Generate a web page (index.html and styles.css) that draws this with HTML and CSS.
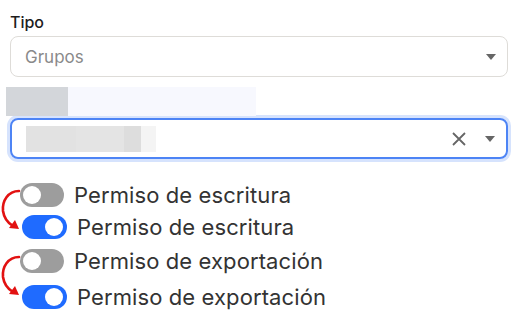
FILE: index.html
```html
<!DOCTYPE html>
<html>
<head>
<meta charset="utf-8">
<link rel="stylesheet" href="styles.css">
</head>
<body>
<div class="page">
  <div class="label">Tipo</div>
  <div class="select">
    <span class="value">Grupos</span>
    <span class="caret"></span>
  </div>
  <div class="blur-row">
    <div class="blur-a"></div>
    <div class="blur-b"></div>
  </div>
  <div class="select focused">
    <span class="blur-value"><i class="b1"></i><i class="b2"></i><i class="b3"></i><i class="b4"></i></span>
    <span class="actions">
      <svg class="clear" width="16" height="16" viewBox="0 0 16 16"><path d="M2 2 L14 14 M14 2 L2 14" stroke="#666" stroke-width="1.8" fill="none"/></svg>
      <span class="caret"></span>
    </span>
  </div>
  <div class="toggles">
    <div class="row r1"><span class="switch off"><span class="knob"></span></span><span class="text">Permiso de escritura</span></div>
    <div class="row r2"><span class="switch on"><span class="knob"></span></span><span class="text">Permiso de escritura</span></div>
    <div class="row r3"><span class="switch off"><span class="knob"></span></span><span class="text">Permiso de exportación</span></div>
    <div class="row r4"><span class="switch on"><span class="knob"></span></span><span class="text">Permiso de exportación</span></div>
    <svg class="arrow a1" width="24" height="46" viewBox="0 0 24 46"><path d="M19 4 C8 4 2 14 3 24 C4 31 8 36 13 39" stroke="#e21111" stroke-width="2.6" fill="none" stroke-linecap="round"/><path d="M9 41 L19 42 L15 33 Z" fill="#e21111"/></svg>
    <svg class="arrow a2" width="24" height="46" viewBox="0 0 24 46"><path d="M19 4 C8 4 2 14 3 24 C4 31 8 36 13 39" stroke="#e21111" stroke-width="2.6" fill="none" stroke-linecap="round"/><path d="M9 41 L19 42 L15 33 Z" fill="#e21111"/></svg>
  </div>
</div>
</body>
</html>
```
FILE: styles.css
```css
html, body { margin: 0; padding: 0; background: #fff; }
body { font-family: Inter, "Noto Sans", sans-serif; color: #222; }
.page { width: 498px; padding: 12px 0 0 10px; }
.label { font-size: 16px; font-weight: 500; line-height: 20px; color: #1d1d1d; height: 24px; }
.select {
  box-sizing: border-box; height: 41px; border: 1px solid #dedcd8; border-radius: 8px;
  display: flex; align-items: center; justify-content: space-between; padding: 0 11px 0 14px;
}
.value { font-size: 17px; color: #8a8a8a; }
.caret { width: 0; height: 0; border-left: 5.5px solid transparent; border-right: 5.5px solid transparent; border-top: 6px solid #666; }
.blur-row { display: flex; height: 29px; margin: 10px 0 0 -4px; }
.blur-a { width: 62px; background: #d3d6da; }
.blur-b { width: 188px; background: #f7f8fe; }
.focused { border: 2px solid #4d84f5; box-shadow: 0 0 0 3px #d6e3fd; margin-top: 2px; padding-left: 14px; }
.blur-value { display: flex; height: 26px; }
.blur-value i { display: block; height: 26px; }
.b1 { width: 50px; background: #e2e2e2; }
.b2 { width: 48px; background: #e4e4e4; }
.b3 { width: 17px; background: #dddddd; }
.b4 { width: 15px; background: #f4f4f4; }
.actions { display: flex; align-items: center; gap: 18px; }
.clear { display: block; }
.toggles { position: relative; margin-top: 20px; margin-left: -10px; }
.row { display: flex; align-items: center; height: 32px; padding-left: 20px; }
.r2, .r4 { padding-left: 22px; }
.r2 { height: 32px; }
.r3 { height: 36px; }
.r4 { height: 36px; }
.switch { position: relative; width: 44px; height: 24px; border-radius: 12px; flex: none; }
.switch.off { background: #9d9d9d; }
.switch.on { background: #1f6bff; width: 45px; height: 24px; }
.knob { position: absolute; top: 3px; width: 18px; height: 18px; border-radius: 50%; background: #fff; }
.off .knob { left: 3px; }
.on .knob { right: 4px; }
.text { font-size: 22px; color: #333; margin-left: 10px; letter-spacing: 0.1px; }
.arrow { position: absolute; left: 0; }
.a1 { top: 8px; }
.a2 { top: 74px; }
```
